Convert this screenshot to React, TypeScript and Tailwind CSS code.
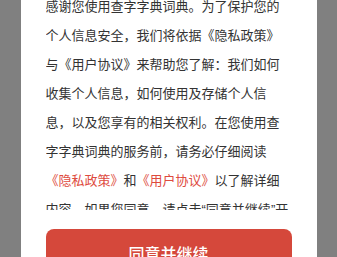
import React from "react";

export default function App() {
  return (
    <div
      className="w-[337px] h-[257px] bg-[#808080] overflow-hidden flex justify-center"
      style={{ fontFamily: '"Noto Sans CJK SC", "Noto Sans", sans-serif' }}
    >
      <div className="w-[296px] h-[300px] bg-white px-[25px] flex flex-col shrink-0">
        <div className="h-[210px] overflow-hidden shrink-0">
          <p className="-mt-[9px] text-[13px] leading-[29px] text-[#333333]">
            感谢您使用查字字典词典。为了保护您的个人信息安全，我们将依据《隐私政策》与《用户协议》来帮助您了解：我们如何收集个人信息，如何使用及存储个人信息，以及您享有的相关权利。在您使用查字字典词典的服务前，请务必仔细阅读
            <span className="text-[#de4b3e]">《隐私政策》</span>和
            <span className="text-[#de4b3e]">《用户协议》</span>
            以了解详细内容，如果您同意，请点击
            <span className="font-['Liberation_Sans']">“</span>同意并继续
            <span className="font-['Liberation_Sans']">”</span>开始接受我们的服务。
          </p>
        </div>
        <button className="mt-[19px] h-[48px] w-full shrink-0 rounded-[8px] bg-[#d5483b] text-white text-[16px] font-medium">
          同意并继续
        </button>
      </div>
    </div>
  );
}
